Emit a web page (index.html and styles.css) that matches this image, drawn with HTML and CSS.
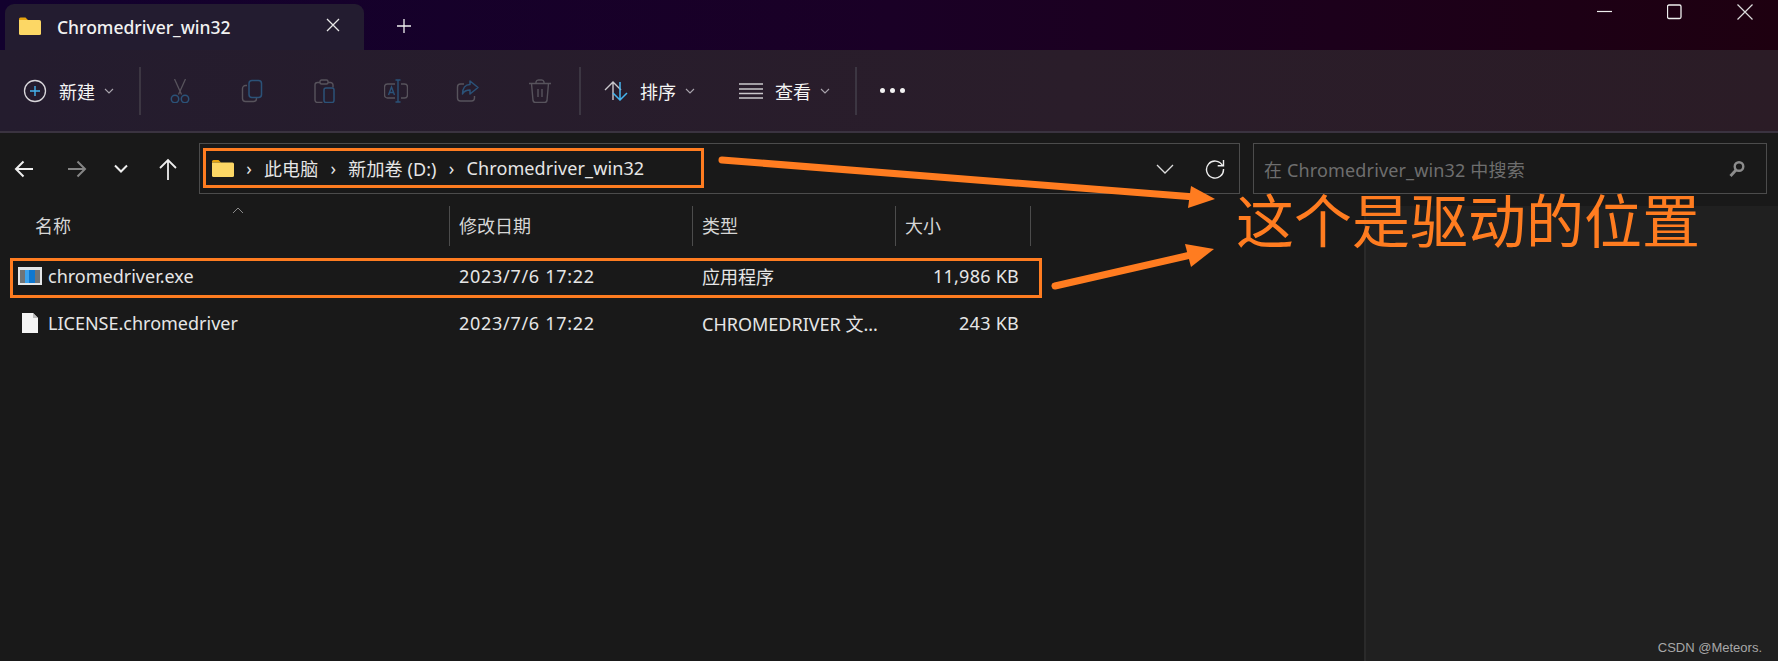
FILE: index.html
```html
<!DOCTYPE html>
<html lang="zh-CN">
<head>
    <meta charset="UTF-8">
    <title>Chromedriver_win32</title>
    <link rel="stylesheet" href="styles.css">
</head>
<body>

    <!-- Title bar -->
    <div class="titlebar">
        <div class="tab">
            <svg class="tab-folder" width="22" height="18" viewBox="0 0 22 18">
                <path d="M0 2a1.500 1.500 0 0 1 1.500-1.500h5l2.500 2.500h-9z" fill="#e6a40f"/>
                <path d="M0 3h20.500a1.500 1.500 0 0 1 1.500 1.500v12a1.500 1.500 0 0 1-1.500 1.500h-19a1.500 1.500 0 0 1-1.500-1.500z" fill="#fcd765"/>
            </svg>
            <span class="tab-title">Chromedriver_win32</span>
            <svg class="tab-close" width="14" height="14" viewBox="0 0 14 14"><path d="M1 1l12 12M13 1L1 13" stroke="#e8e8e8" stroke-width="1.300"/></svg>
        </div>
        <svg class="tab-add" width="16" height="16" viewBox="0 0 16 16"><path d="M8 1v14M1 8h14" stroke="#f0f0f0" stroke-width="1.300"/></svg>
        <div class="window-controls">
            <svg width="16" height="16" viewBox="0 0 16 16"><path d="M0 7.500h15" stroke="#eee" stroke-width="1.200"/></svg>
            <svg width="16" height="16" viewBox="0 0 16 16"><rect x=".5" y="1" width="13.500" height="13.500" rx="1.500" fill="none" stroke="#eee" stroke-width="1.300"/></svg>
            <svg width="16" height="16" viewBox="0 0 16 16"><path d="M.5 .5l15 15M15.500 .5l-15 15" stroke="#ddd" stroke-width="1.200"/></svg>
        </div>
    </div>

    <!-- Command bar -->
    <div class="toolbar">
        <div class="cmd cmd-new">
            <svg width="24" height="24" viewBox="0 0 24 24">
                <circle cx="12" cy="12" r="10.500" fill="none" stroke="#d8d6da" stroke-width="1.300"/>
                <path d="M12 7v10M7 12h10" stroke="#45b4ee" stroke-width="1.400"/>
            </svg>
            <span>新建</span>
            <svg class="chev" width="10" height="6" viewBox="0 0 10 6"><path d="M1 1l4 4 4-4" fill="none" stroke="#a9a4ad" stroke-width="1.100"/></svg>
        </div>
        <div class="sep sep-new"></div>
        <div class="icon-btn icon-first">
            <svg width="24" height="24" viewBox="0 0 24 24">
                <path d="M6.500 0l7 15.500M17.500 0l-7 15.500" stroke="#57535c" stroke-width="1.300" fill="none"/>
                <circle cx="7" cy="20" r="3.700" fill="none" stroke="#2b5278" stroke-width="1.500"/>
                <circle cx="17" cy="20" r="3.700" fill="none" stroke="#2b5278" stroke-width="1.500"/>
            </svg>
        </div>
        <div class="icon-btn">
            <svg width="24" height="24" viewBox="0 0 24 24">
                <path d="M7 6.500h-1.500a3 3 0 0 0-3 3v10a3 3 0 0 0 3 3h8a3 3 0 0 0 3-3v-.5" fill="none" stroke="#57535c" stroke-width="1.400"/>
                <rect x="9" y="1.500" width="12.500" height="17" rx="3" fill="none" stroke="#2b5278" stroke-width="1.500"/>
            </svg>
        </div>
        <div class="icon-btn">
            <svg width="24" height="24" viewBox="0 0 24 24">
                <path d="M8 3.500h-2.500a2.500 2.500 0 0 0-2.500 2.500v15a2.500 2.500 0 0 0 2.500 2.500h5M16 3.500h2.500a2.500 2.500 0 0 1 2.500 2.500v2.500" fill="none" stroke="#57535c" stroke-width="1.400"/>
                <rect x="8" y="1" width="8" height="4" rx="1.500" fill="none" stroke="#57535c" stroke-width="1.400"/>
                <rect x="12" y="9" width="10" height="14.500" rx="2" fill="none" stroke="#2b5278" stroke-width="1.500"/>
            </svg>
        </div>
        <div class="icon-btn">
            <svg width="24" height="24" viewBox="0 0 24 24">
                <path d="M11 5h-7.500a3 3 0 0 0-3 3v8a3 3 0 0 0 3 3h7.500M17 5h3.500a3 3 0 0 1 3 3v8a3 3 0 0 1-3 3h-3.500" fill="none" stroke="#57535c" stroke-width="1.400"/>
                <path d="M14 1v22M11.500 1h5M11.500 23h5M4.500 16l3-8 3 8M5.500 13.500h4" fill="none" stroke="#2b5278" stroke-width="1.400"/>
            </svg>
        </div>
        <div class="icon-btn">
            <svg width="24" height="24" viewBox="0 0 24 24">
                <path d="M8 5h-3.500a3 3 0 0 0-3 3v11a3 3 0 0 0 3 3h11a3 3 0 0 0 3-3v-2" fill="none" stroke="#57535c" stroke-width="1.400"/>
                <path d="M14 2l8 6.500-8 6.500v-4c-4 0-6 1-7.500 4 0-6 3-9.500 7.500-9.500z" fill="none" stroke="#2b5278" stroke-width="1.500" stroke-linejoin="round"/>
            </svg>
        </div>
        <div class="icon-btn">
            <svg width="24" height="24" viewBox="0 0 24 24">
                <path d="M1 4.500h22M8 4.500v-1.500a2.500 2.500 0 0 1 2.500-2h3a2.500 2.500 0 0 1 2.500 2v1.500M3.500 4.500l1.500 17a2.500 2.500 0 0 0 2.500 2h9a2.500 2.500 0 0 0 2.500-2l1.500-17M10 10v8M14 10v8" fill="none" stroke="#57535c" stroke-width="1.400"/>
            </svg>
        </div>
        <div class="sep sep-edit"></div>
        <div class="cmd cmd-sort">
            <svg width="24" height="20" viewBox="0 0 24 20">
                <path d="M9 19v-18M1 9l8-8 8 8" fill="none" stroke="#c9c7cb" stroke-width="1.400"/>
                <path d="M16 1v18M9 12l7 7 7-7" fill="none" stroke="#45b4ee" stroke-width="1.500"/>
            </svg>
            <span>排序</span>
            <svg class="chev" width="10" height="6" viewBox="0 0 10 6"><path d="M1 1l4 4 4-4" fill="none" stroke="#a9a4ad" stroke-width="1.100"/></svg>
        </div>
        <div class="cmd cmd-view">
            <svg width="24" height="18" viewBox="0 0 24 18">
                <path d="M0 2h24M0 7h24M0 11.500h24M0 16h24" stroke="#c9c7cb" stroke-width="1.300"/>
            </svg>
            <span>查看</span>
            <svg class="chev" width="10" height="6" viewBox="0 0 10 6"><path d="M1 1l4 4 4-4" fill="none" stroke="#a9a4ad" stroke-width="1.100"/></svg>
        </div>
        <div class="sep sep-view"></div>
        <div class="more"><i></i><i></i><i></i></div>
    </div>

    <!-- Address row -->
    <div class="nav">
        <div class="nav-buttons">
            <svg class="back" width="20" height="18" viewBox="0 0 20 18"><path d="M19 9H2M9.500 1.500L2 9l7.500 7.500" fill="none" stroke="#eee" stroke-width="2"/></svg>
            <svg class="forward" width="20" height="18" viewBox="0 0 20 18"><path d="M1 9h17M10.500 1.500L18 9l-7.500 7.500" fill="none" stroke="#858585" stroke-width="2"/></svg>
            <svg class="down" width="14" height="9" viewBox="0 0 14 9"><path d="M1 1.500l6 6 6-6" fill="none" stroke="#eee" stroke-width="2"/></svg>
            <svg class="up" width="20" height="22" viewBox="0 0 20 22"><path d="M10 22V2M2 10l8-8 8 8" fill="none" stroke="#eee" stroke-width="1.800"/></svg>
        </div>
        <div class="address">
            <svg class="crumb-folder" width="22" height="17" viewBox="0 0 22 17">
                <path d="M0 1.500a1.500 1.500 0 0 1 1.500-1.500h5l2.500 2.500h-9z" fill="#e6a40f"/>
                <path d="M0 2.500h20.500a1.500 1.500 0 0 1 1.500 1.500v11.500a1.500 1.500 0 0 1-1.500 1.500h-19a1.500 1.500 0 0 1-1.500-1.500z" fill="#fcd765"/>
            </svg>
            <span class="crumb-sep">›</span>
            <span class="crumb">此电脑</span>
            <span class="crumb-sep">›</span>
            <span class="crumb">新加卷 (D:)</span>
            <span class="crumb-sep">›</span>
            <span class="crumb">Chromedriver_win32</span>
            <svg class="addr-down" width="18" height="10" viewBox="0 0 18 10"><path d="M1 1l8 8 8-8" fill="none" stroke="#ddd" stroke-width="1.300"/></svg>
            <svg class="addr-refresh" width="20" height="20" viewBox="0 0 20 20"><path d="M17.500 6.500a8.500 8.500 0 1 0 1 3.500M18.500 1v5.800h-5.800" fill="none" stroke="#eee" stroke-width="1.400"/></svg>
        </div>
        <div class="search">
            <span class="search-text">在 Chromedriver_win32 中搜索</span>
            <svg width="16" height="18" viewBox="0 0 16 18"><circle cx="10" cy="6.500" r="4.300" fill="none" stroke="#8c8c8c" stroke-width="2.400"/><path d="M7 10l-5.500 6" stroke="#8c8c8c" stroke-width="2.800"/></svg>
        </div>
    </div>

    <!-- File list and details pane -->
    <div class="main">
        <div class="files">
            <svg class="sort-caret" width="12" height="7" viewBox="0 0 12 7"><path d="M1 6l5-5 5 5" fill="none" stroke="#8a8a8a"/></svg>
            <div class="row head">
                <div class="col col-name">名称</div>
                <div class="col">修改日期</div>
                <div class="col">类型</div>
                <div class="col">大小</div>
                <div class="col col-end"></div>
            </div>
            <div class="row item">
                <div class="col col-name">
                    <svg width="24" height="18" viewBox="0 0 24 18">
                        <rect x="0" y="0" width="24" height="18" fill="#e4e6e8"/>
                        <rect x="2" y="3" width="20" height="13" fill="#6f7478"/>
                        <rect x="7" y="3" width="10" height="13" fill="#0f78d0"/>
                        <rect x="7" y="3" width="4" height="13" fill="#3ba2ee"/>
                    </svg>
                    <span>chromedriver.exe</span>
                </div>
                <div class="col col-date">2023/7/6 17:22</div>
                <div class="col">应用程序</div>
                <div class="col col-size">11,986 KB</div>
            </div>
            <div class="row item">
                <div class="col col-name">
                    <svg width="24" height="20" viewBox="0 0 24 20">
                        <path d="M4 0h11l5 5v15h-16z" fill="#f4f4f4"/>
                        <path d="M15 0l5 5h-5z" fill="#bdbdbd"/>
                    </svg>
                    <span>LICENSE.chromedriver</span>
                </div>
                <div class="col col-date">2023/7/6 17:22</div>
                <div class="col">CHROMEDRIVER 文...</div>
                <div class="col col-size">243 KB</div>
            </div>
        </div>
        <div class="details"></div>
    </div>

    <!-- Annotations drawn over the screenshot -->
    <div class="mark mark-address"></div>
    <div class="mark mark-file"></div>
    <svg class="arrows" width="1778" height="661" viewBox="0 0 1778 661">
        <path d="M722 160L1195 197" stroke="#ff7c20" stroke-width="7" stroke-linecap="round"/>
        <path d="M1215 199L1191 186L1188 208z" fill="#ff7c20"/>
        <path d="M1055 286L1195 254" stroke="#ff7c20" stroke-width="7" stroke-linecap="round"/>
        <path d="M1214 249L1185 244L1191 267z" fill="#ff7c20"/>
    </svg>
    <div class="note">这个是驱动的位置</div>
    <div class="watermark">CSDN @Meteors.</div>

</body>
</html>
```

FILE: styles.css
```css
/* General */
html, body {
    height: 100%;
}

body {
    margin: 0;
    position: relative;
    overflow: hidden;
    display: flex;
    flex-direction: column;
    background-color: #191919;
    color: #e6e6e6;
    font-family: "Noto Sans", "Noto Sans CJK SC", sans-serif;
    font-size: 18px;
}

svg {
    display: block;
    flex-shrink: 0;
}

/* Title bar */
.titlebar {
    height: 50px;
    display: flex;
    align-items: flex-end;
    background: linear-gradient(90deg, #12012e, #1a0026 50%, #1e0010);
}

.tab {
    width: 359px;
    height: 46px;
    margin-left: 5px;
    display: flex;
    align-items: flex-start;
    background-color: #231c30;
    border-radius: 9px 9px 0 0;
}

.tab-folder {
    margin: 13px 0 0 14px;
}

.tab-title {
    margin: 10px 0 0 16px;
    width: 180px;
    color: #f2f2f2;
    font-size: 17.500px;
    font-weight: 500;
    line-height: 26px;
    white-space: nowrap;
}

.tab-close {
    margin: 14px 0 0 89px;
}

.tab-add {
    margin: 0 0 16px 32px;
}

.window-controls {
    margin-left: auto;
    align-self: flex-start;
    display: flex;
    gap: 54px;
    padding: 4px 25px 0 0;
}

/* Command bar */
.toolbar {
    height: 81px;
    display: flex;
    align-items: center;
    background: linear-gradient(90deg, #241c2e, #2a1d2a 60%, #2b1c26);
    border-bottom: 2px solid #3a3340;
    color: #f4f4f4;
}

.cmd {
    display: flex;
    align-items: center;
}

.cmd-new {
    padding-left: 23px;
    width: 117px;
    box-sizing: border-box;
}

.cmd-new span {
    margin-left: 12px;
}

.chev {
    margin-left: 9px;
}

.sep {
    width: 2px;
    height: 48px;
    background-color: #3c3642;
}

.sep-new {
    margin-left: 22px;
}

.sep-edit {
    margin-left: 3px;
}

.sep-view {
    margin-left: 25px;
}

.icon-btn {
    width: 72px;
    display: flex;
    justify-content: center;
}

.icon-first {
    margin-left: 3px;
}

.cmd-sort {
    margin-left: 23px;
}

.cmd-sort span,
.cmd-view span {
    margin-left: 12px;
}

.cmd-view {
    margin-left: 44px;
}

.more {
    display: flex;
    gap: 5px;
    margin-left: 23px;
}

.more i {
    width: 5px;
    height: 5px;
    border-radius: 50%;
    background-color: #f2f2f2;
}

/* Address row */
.nav {
    height: 73px;
    display: flex;
    align-items: flex-start;
    padding-top: 10px;
    box-sizing: border-box;
}

.nav-buttons {
    width: 199px;
    height: 51px;
    display: flex;
    align-items: center;
}

.back {
    margin-left: 14px;
}

.forward {
    margin-left: 33px;
}

.down {
    margin-left: 27px;
}

.up {
    margin-left: 30px;
}

.address {
    width: 1041px;
    height: 51px;
    box-sizing: border-box;
    display: flex;
    align-items: center;
    border: 1px solid #4c4c4c;
    white-space: nowrap;
}

.crumb-folder {
    margin-left: 12px;
}

.crumb {
    padding-bottom: 2px;
    letter-spacing: .1px;
}

.crumb-sep {
    width: 30px;
    text-align: center;
    padding-bottom: 2px;
}

.addr-down {
    margin-left: auto;
}

.addr-refresh {
    margin: 0 14px 0 31px;
}

.search {
    width: 514px;
    height: 51px;
    margin-left: 13px;
    box-sizing: border-box;
    display: flex;
    align-items: center;
    justify-content: space-between;
    padding: 0 21px 0 10px;
    border: 1px solid #4c4c4c;
    color: #6e6e6e;
    white-space: nowrap;
}

.search-text {
    letter-spacing: .15px;
}

/* File list */
.main {
    flex: 1;
    display: flex;
}

.files {
    width: 1364px;
    position: relative;
}

.sort-caret {
    position: absolute;
    left: 232px;
    top: 1px;
}

.row {
    display: grid;
    grid-template-columns: 449px 243px 203px 135px 1fr;
    align-items: center;
    height: 47px;
}

.row.head {
    height: 40px;
    margin-bottom: 6px;
    color: #d6d6d6;
}

.col {
    padding-left: 10px;
    white-space: nowrap;
}

.head .col {
    border-left: 1px solid #4c4c4c;
    height: 40px;
    line-height: 40px;
    padding-left: 9px;
}

.head .col-name {
    border-left: none;
    padding-left: 35px;
}

.col-name {
    display: flex;
    align-items: center;
    gap: 6px;
    padding-left: 18px;
}

.col-date {
    letter-spacing: .7px;
}

.col-size {
    text-align: right;
    padding: 0 11px 0 0;
    letter-spacing: .25px;
}

.details {
    flex: 1;
    background-color: #202020;
    border-left: 2px solid #2a2a2a;
}

/* Orange annotations */
.mark {
    position: absolute;
    border: 3px solid #ff7c20;
    box-sizing: border-box;
}

.mark-address {
    left: 203px;
    top: 148px;
    width: 501px;
    height: 40px;
}

.mark-file {
    left: 10px;
    top: 258px;
    width: 1032px;
    height: 40px;
}

.arrows {
    position: absolute;
    left: 0;
    top: 0;
}

.note {
    position: absolute;
    left: 1236px;
    top: 188px;
    font-family: "Noto Sans CJK SC", sans-serif;
    font-size: 58px;
    line-height: 60px;
    color: #ff7c20;
    white-space: nowrap;
}

.watermark {
    position: absolute;
    right: 16px;
    bottom: 6px;
    font-family: "Liberation Sans", sans-serif;
    font-size: 13px;
    color: #a8a8a8;
}
```
